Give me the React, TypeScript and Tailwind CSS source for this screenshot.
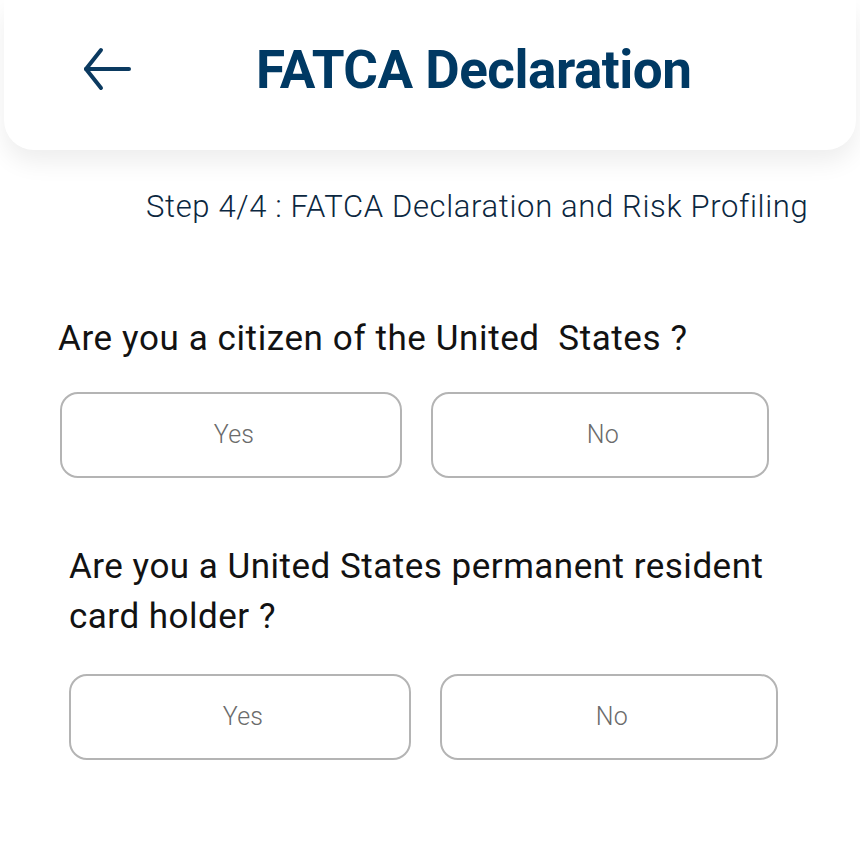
import React from "react";

function Choice({ label, w }: { label: string; w: string }) {
  return (
    <button
      className={`${w} h-[86px] rounded-[18px] border-2 border-[#b4b4b4] bg-white flex items-center justify-center pl-[6px] text-[25px] text-[#6b6b6b] font-light tracking-[0.3px]`}
    >
      {label}
    </button>
  );
}

export default function App() {
  return (
    <div
      className="w-[860px] h-[860px] bg-white overflow-hidden"
      style={{ fontFamily: "Roboto, 'Liberation Sans', sans-serif" }}
    >
      <div className="mx-[4px] h-[150px] bg-white rounded-b-[30px] shadow-[0_12px_24px_rgba(0,0,0,0.07)] flex items-start pt-[42px]">
        <svg
          width="56"
          height="48"
          viewBox="0 0 56 48"
          className="ml-[73px] mt-[3px]"
          fill="none"
          stroke="#0b3a60"
          strokeWidth="4"
          strokeLinecap="round"
          strokeLinejoin="round"
        >
          <path d="M52 24H9" />
          <path d="M24 5L9 24L24 43" />
        </svg>
        <h1 className="ml-[123px] text-[53px] leading-[56px] font-bold text-[#003963] tracking-[-0.5px]">
          FATCA Declaration
        </h1>
      </div>

      <p className="mt-[39px] pl-[146px] text-[31px] leading-[35px] text-[#0b2740] font-light tracking-[0.65px]">
        Step 4/4 : FATCA Declaration and Risk Profiling
      </p>

      <div className="pl-[58px] mt-[90px]">
        <p className="text-[35px] leading-[50px] text-[#121212] whitespace-pre tracking-[0.6px]">
          {"Are you a citizen of the United  States ?"}
        </p>
        <div className="flex gap-[29px] mt-[28px] ml-[2px]">
          <Choice label="Yes" w="w-[342px]" />
          <Choice label="No" w="w-[338px]" />
        </div>
      </div>

      <div className="pl-[69px] mt-[64px]">
        <p className="text-[35px] leading-[50px] text-[#121212] w-[730px] tracking-[0.5px]">
          Are you a United States permanent resident card holder ?
        </p>
        <div className="flex gap-[29px] mt-[32px]">
          <Choice label="Yes" w="w-[342px]" />
          <Choice label="No" w="w-[338px]" />
        </div>
      </div>
    </div>
  );
}
